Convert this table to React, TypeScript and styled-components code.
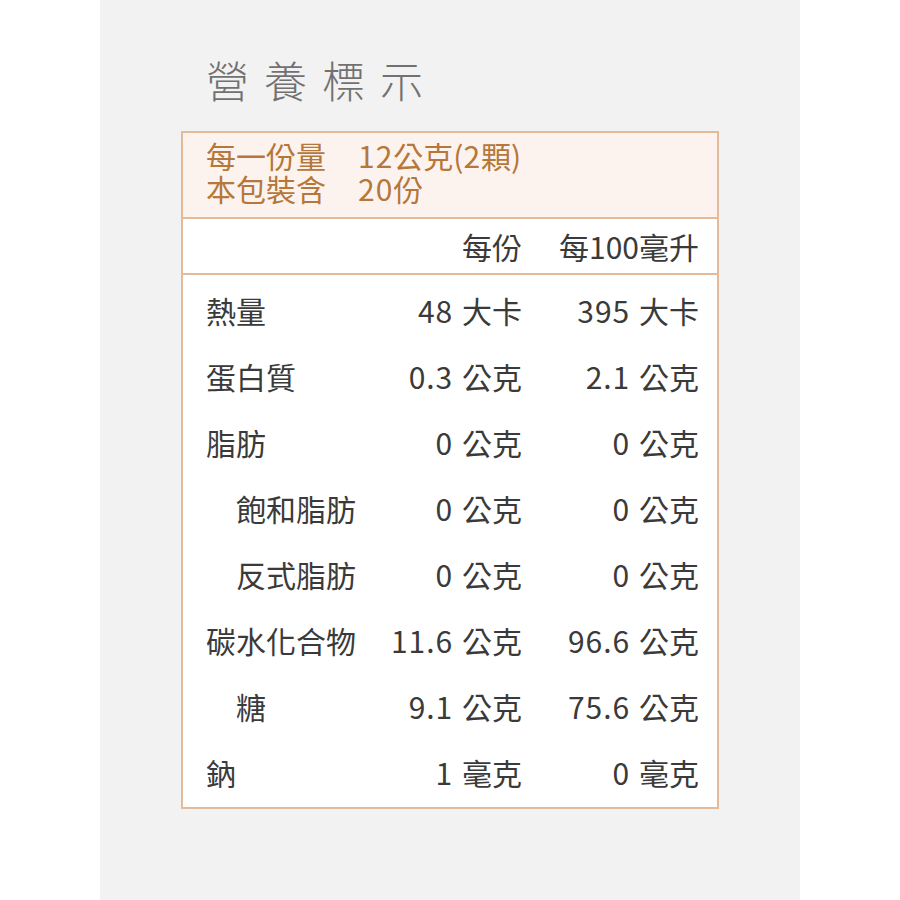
import styled, { createGlobalStyle } from "styled-components";

const GlobalStyle = createGlobalStyle`
  html, body {
    margin: 0;
    padding: 0;
    background: #ffffff;
  }
  body {
    font-family: "Noto Sans CJK TC", "Noto Sans", sans-serif;
  }
`;

const Page = styled.div`
  display: flex;
  justify-content: center;
  width: 900px;
  height: 900px;
`;

const Panel = styled.section`
  width: 700px;
  height: 900px;
  background: #f2f2f2;
  box-sizing: border-box;
  padding: 51px 82px 0 81px;
`;

const Title = styled.h1`
  margin: 0 0 24px 25px;
  font-size: 43px;
  line-height: 56px;
  font-weight: 300;
  letter-spacing: 15px;
  color: #717171;
`;

const Table = styled.div`
  width: 538px;
  box-sizing: border-box;
  border: 2px solid #e4ba98;
  background: #ffffff;
`;

const ServingInfo = styled.div`
  background: #fdf3ee;
  border-bottom: 2px solid #e4ba98;
  padding: 6px 23px 12px;
  color: #b5773b;
  font-size: 30px;
  line-height: 33px;
`;

const InfoLine = styled.div`
  display: flex;
`;

const InfoLabel = styled.span`
  width: 152px;
`;

const Row = styled.div<{ $height: number }>`
  display: grid;
  grid-template-columns: 1fr 160px 177px;
  align-items: center;
  height: ${({ $height }) => $height}px;
  padding: 0 18px 0 23px;
  font-size: 30px;
  line-height: 40px;
  color: #3a3a3a;
  white-space: nowrap;
`;

const HeadRow = styled(Row)`
  border-bottom: 2px solid #e4ba98;
`;

const Body = styled.div`
  padding: 2px 0;
`;

const Label = styled.span<{ $indent?: boolean }>`
  padding-left: ${({ $indent }) => ($indent ? "30px" : "0")};
`;

const Value = styled.span`
  text-align: right;
`;

const Num = styled.span<{ $gap?: number }>`
  letter-spacing: 1px;
  margin-right: ${({ $gap }) => $gap ?? 2}px;
`;

const nutrients = [
  { name: "熱量", perServing: ["48", "大卡"], per100: ["395", "大卡"] },
  { name: "蛋白質", perServing: ["0.3", "公克"], per100: ["2.1", "公克"] },
  { name: "脂肪", perServing: ["0", "公克"], per100: ["0", "公克"] },
  { name: "飽和脂肪", perServing: ["0", "公克"], per100: ["0", "公克"], indent: true },
  { name: "反式脂肪", perServing: ["0", "公克"], per100: ["0", "公克"], indent: true },
  { name: "碳水化合物", perServing: ["11.6", "公克"], per100: ["96.6", "公克"] },
  { name: "糖", perServing: ["9.1", "公克"], per100: ["75.6", "公克"], indent: true },
  { name: "鈉", perServing: ["1", "毫克"], per100: ["0", "毫克"] },
];

export default function App() {
  return (
    <>
      <GlobalStyle />
      <Page>
        <Panel>
          <Title>營養標示</Title>
          <Table>
            <ServingInfo>
              <InfoLine>
                <InfoLabel>每一份量</InfoLabel>
                <span>
                  <Num $gap={0}>12</Num>公克(<Num $gap={0}>2</Num>顆)
                </span>
              </InfoLine>
              <InfoLine>
                <InfoLabel>本包裝含</InfoLabel>
                <span>
                  <Num $gap={0}>20</Num>份
                </span>
              </InfoLine>
            </ServingInfo>
            <HeadRow $height={54}>
              <span />
              <Value>每份</Value>
              <Value>每100毫升</Value>
            </HeadRow>
            <Body>
              {nutrients.map((item) => (
                <Row key={item.name} $height={66}>
                  <Label $indent={item.indent}>{item.name}</Label>
                  <Value>
                    <Num>{item.perServing[0]}</Num> {item.perServing[1]}
                  </Value>
                  <Value>
                    <Num>{item.per100[0]}</Num> {item.per100[1]}
                  </Value>
                </Row>
              ))}
            </Body>
          </Table>
        </Panel>
      </Page>
    </>
  );
}
